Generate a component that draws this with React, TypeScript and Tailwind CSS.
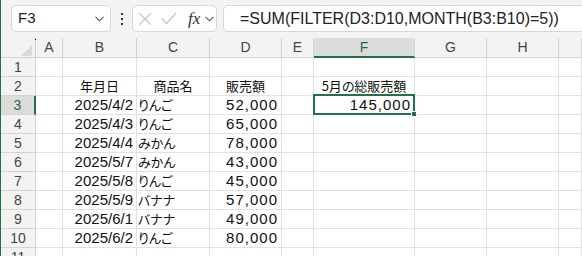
import React from "react";

const colLabels = ["A", "B", "C", "D", "E", "F", "G", "H", "I"];

const sales = [
  ["2025/4/2", "りんご", "52,000"],
  ["2025/4/3", "りんご", "65,000"],
  ["2025/4/4", "みかん", "78,000"],
  ["2025/5/7", "みかん", "43,000"],
  ["2025/5/8", "りんご", "45,000"],
  ["2025/5/9", "バナナ", "57,000"],
  ["2025/6/1", "バナナ", "49,000"],
  ["2025/6/2", "りんご", "80,000"],
];

const jp = "font-['Noto_Sans_CJK_JP',sans-serif] text-[13px] [font-feature-settings:'palt']";

function Chevron() {
  return (
    <svg width="9" height="6" viewBox="0 0 9 6" fill="none">
      <polyline points="0.5,0.8 4.5,4.8 8.5,0.8" stroke="#555" strokeWidth="1.1" />
    </svg>
  );
}

function FormulaBar() {
  return (
    <div className="h-[38px] bg-[#f3f3f3] flex items-start pt-[5px]">
      <div className="ml-[10px] w-[100px] h-[27px] bg-white border border-[#d6d6d6] rounded-[5px] flex items-center pl-[6px] pr-[6px]">
        <span className="text-[15px] text-[#222] flex-1">F3</span>
        <Chevron />
      </div>
      <div className="w-[21px] h-[27px] flex flex-col items-center justify-center gap-[3px]">
        <span className="w-[2px] h-[2px] bg-[#333]" />
        <span className="w-[2px] h-[2px] bg-[#333]" />
        <span className="w-[2px] h-[2px] bg-[#333]" />
      </div>
      <div className="w-[85px] h-[27px] bg-white border border-[#d6d6d6] rounded-[5px] flex items-center pl-[5px]">
        <svg width="14" height="14" viewBox="0 0 14 14" fill="none">
          <path d="M1 1L13 13M13 1L1 13" stroke="#c6c6c6" strokeWidth="1.2" />
        </svg>
        <svg className="ml-[9px]" width="16" height="13" viewBox="0 0 16 13" fill="none">
          <polyline points="1,6.5 5.5,11.5 15,1" stroke="#c6c6c6" strokeWidth="1.2" />
        </svg>
        <span className="ml-[11px] font-['Liberation_Serif',serif] italic text-[17px] text-[#333] leading-none">
          fx
        </span>
        <span className="ml-[5px]">
          <Chevron />
        </span>
      </div>
      <div className="ml-[6px] flex-1 -mr-[20px] h-[27px] bg-white border border-[#d6d6d6] rounded-[5px] flex items-center pl-[16px]">
        <span className="text-[16px] text-[#222] whitespace-nowrap">=SUM(FILTER(D3:D10,MONTH(B3:B10)=5))</span>
      </div>
    </div>
  );
}

function Cell({
  children,
  align = "l",
  japanese = false,
  extra = "",
}: {
  children?: React.ReactNode;
  align?: "l" | "r" | "c";
  japanese?: boolean;
  extra?: string;
}) {
  const justify = align === "r" ? "justify-end pr-[3px]" : align === "c" ? "justify-center" : "justify-start pl-[1px]";
  return (
    <div
      className={`relative h-[19px] border-r border-b border-[#e1e1e1] flex items-center whitespace-nowrap text-[#111] ${justify} ${
        japanese ? jp : "text-[15px]"
      } ${extra}`}
    >
      {children}
    </div>
  );
}

function rowCells(r: number) {
  const cells: React.ReactNode[] = [];
  for (const c of colLabels) {
    let content: React.ReactNode = null;
    let align: "l" | "r" | "c" = "l";
    let japanese = false;
    let extra = "";
    if (r === 2) {
      if (c === "B") content = "年月日";
      if (c === "C") content = "商品名";
      if (c === "D") content = "販売額";
      if (c === "F") content = "5月の総販売額";
      if (content) {
        align = "c";
        japanese = true;
      }
    }
    if (r >= 3 && r <= 10) {
      const row = sales[r - 3];
      if (c === "B") {
        content = row[0];
        align = "r";
      }
      if (c === "C") {
        content = row[1];
        japanese = true;
      }
      if (c === "D") {
        content = row[2];
        align = "r";
        extra = "tracking-[1px]";
      }
    }
    if (r === 3 && c === "F") {
      content = (
        <>
          <span className="tracking-[1px]">145,000</span>
          <span className="absolute -left-px -top-[2px] -right-px -bottom-px border-2 border-[#217346] pointer-events-none" />
          <span className="absolute -right-[3px] -bottom-[3px] w-[6px] h-[6px] bg-[#217346] border border-white" />
        </>
      );
      align = "r";
      extra = "z-10";
    }
    cells.push(
      <Cell key={`${r}-${c}`} align={align} japanese={japanese} extra={extra}>
        {content}
      </Cell>
    );
  }
  return cells;
}

export default function App() {
  const rowsNums = [1, 2, 3, 4, 5, 6, 7, 8, 9, 10, 11];
  return (
    <div className="w-[582px] h-[256px] overflow-hidden bg-white border-l border-[#217346] font-['Liberation_Sans','Noto_Sans_CJK_JP',sans-serif]">
      <FormulaBar />
      <div className="grid grid-cols-[35px_27px_74px_73px_72px_32px_101px_72px_72px_1fr]">
        <div className="relative h-[20px] bg-[#f3f3f3] border-r border-b border-[#d4d4d4]">
          <svg className="absolute left-[20px] top-[7px]" width="12" height="11" viewBox="0 0 12 11">
            <polygon points="11,0 11,11 0,11" fill="#dadada" />
          </svg>
          <span className="absolute -right-px top-px w-px h-px bg-black" />
        </div>
        {colLabels.map((c) =>
          c === "F" ? (
            <div
              key={c}
              className="h-[20px] bg-[#dcdcdc] border-r border-[#d4d4d4] border-b-2 border-b-[#217346] flex items-center justify-center text-[14px] text-[#1e6c41]"
            >
              {c}
            </div>
          ) : (
            <div
              key={c}
              className="h-[20px] bg-[#f3f3f3] border-r border-b border-[#d4d4d4] flex items-center justify-center text-[14px] text-[#444]"
            >
              {c === "I" ? "" : c}
            </div>
          )
        )}
        {rowsNums.map((r) => (
          <React.Fragment key={r}>
            {r === 3 ? (
              <div className="h-[19px] bg-[#dcdcdc] border-b border-[#d4d4d4] border-r-2 border-r-[#217346] flex items-center justify-center text-[14px] text-[#1e6c41]">
                {r}
              </div>
            ) : (
              <div className="h-[19px] bg-[#f3f3f3] border-r border-b border-[#d4d4d4] flex items-center justify-center text-[14px] text-[#444]">
                {r}
              </div>
            )}
            {rowCells(r)}
          </React.Fragment>
        ))}
      </div>
    </div>
  );
}
